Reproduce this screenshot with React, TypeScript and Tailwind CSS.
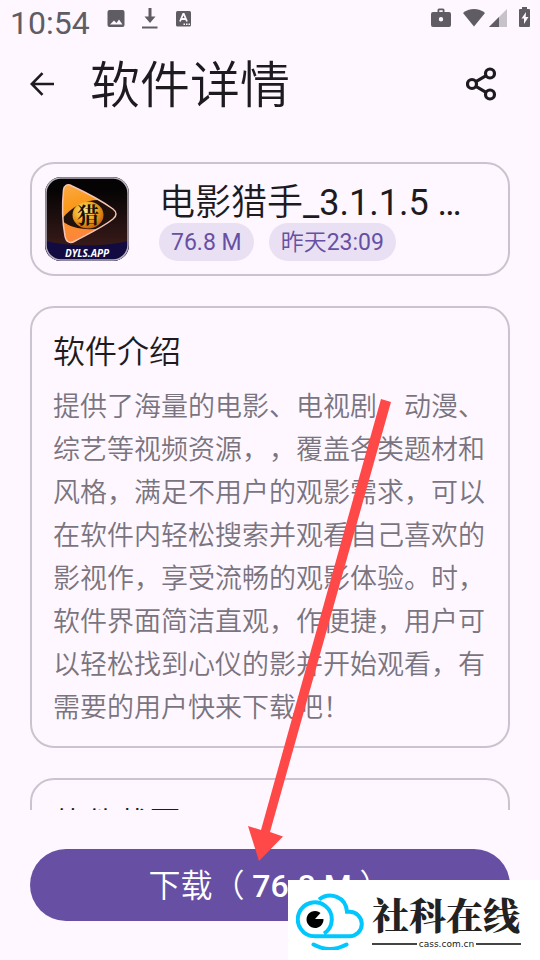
import React from 'react';

const description =
  '提供了海量的电影、电视剧、动漫、综艺等视频资源，，覆盖各类题材和风格，满足不用户的观影需求，可以在软件内轻松搜索并观看自己喜欢的影视作，享受流畅的观影体验。时，软件界面简洁直观，作便捷，用户可以轻松找到心仪的影并开始观看，有需要的用户快来下载吧！';

const StatusBar: React.FC = () => (
  <div className="flex h-11 shrink-0 items-start justify-between pr-2 pl-2.5 text-[#605c64]">
    <div className="flex items-start">
      <span className="w-20 pt-1 text-[32px] leading-[38px]">10:54</span>
      <div className="flex gap-4 pt-2 pl-4">
        <svg width="20" height="22" viewBox="0 0 20 22" fill="currentColor">
          <path
            fillRule="evenodd"
            d="M3.500 2h13a2 2 0 0 1 2 2v13a2 2 0 0 1-2 2h-13a2 2 0 0 1-2-2V4a2 2 0 0 1 2-2zM4 16.500h12.500L13 11.500 10.500 15 8 12.500z"
          />
        </svg>
        <svg width="18" height="22" viewBox="0 0 18 22" fill="currentColor">
          <path d="M6.500 0h3v8.500h4L8 15 2.500 8.500h4zM0 18.500h15.500v2H0z" />
        </svg>
        <svg width="16" height="22" viewBox="0 0 16 22">
          <rect x="0" y="3" width="15" height="15.500" rx="1.500" fill="currentColor" />
          <path
            d="M4 13.500 7.200 6h.600l3.200 7.500M5.500 11h4"
            fill="none"
            stroke="#fef7ff"
            strokeWidth="1.800"
          />
          <path d="M7.500 15.500h1.500v1.500H7.500zM10 15.500h1.500v1.500H10zM12.500 15.500H14v1.500h-1.500z" fill="#fef7ff" />
        </svg>
      </div>
    </div>
    <div className="flex items-start pt-[7px]">
      <svg width="22" height="22" viewBox="0 0 22 22" fill="currentColor">
        <path
          fillRule="evenodd"
          d="M7.500 5V3a1.500 1.500 0 0 1 1.500-1.500h4A1.500 1.500 0 0 1 14.500 3v2H19a2 2 0 0 1 2 2v11a2 2 0 0 1-2 2H3a2 2 0 0 1-2-2V7a2 2 0 0 1 2-2zM9.300 5h3.400V3.200H9.300zM11 10a2.200 2.200 0 1 0 0 4.400 2.200 2.200 0 0 0 0-4.400z"
        />
      </svg>
      <svg className="ml-2.5" width="24" height="22" viewBox="0 0 24 22" fill="currentColor">
        <path d="M1 6C7 .700 17 .700 23 6L12 19.500z" />
      </svg>
      <svg className="ml-0.5" width="20" height="22" viewBox="0 0 20 22" fill="currentColor">
        <path d="M19 2v18H1z" opacity=".35" />
        <path d="M11 10v10H1z" />
      </svg>
      <svg className="ml-2.5" width="14" height="22" viewBox="0 0 14 22">
        <path
          d="M4 0h5v2h2a1 1 0 0 1 1 1v16a1 1 0 0 1-1 1H2a1 1 0 0 1-1-1V3a1 1 0 0 1 1-1h2z"
          fill="currentColor"
        />
        <path d="M8 5 3.500 11.500H6V17l4.500-7H7.700z" fill="#fef7ff" />
      </svg>
    </div>
  </div>
);

const Header: React.FC = () => (
  <header className="flex h-20 shrink-0 items-center px-[30px]">
    <button type="button" aria-label="返回" className="mr-9">
      <svg width="24" height="24" viewBox="0 0 24 24" fill="none" stroke="currentColor" strokeWidth="2.600">
        <path d="M24 12H2M12.500 1.200 1.800 12l10.700 10.800" />
      </svg>
    </button>
    <h1 className="grow pt-1 text-[50px] leading-[72px] font-[350]">软件详情</h1>
    <button type="button" aria-label="分享" className="mr-3">
      <svg width="32" height="36" viewBox="0 0 32 36" fill="none" stroke="currentColor" strokeWidth="3.200">
        <circle cx="24" cy="7.500" r="4.500" />
        <circle cx="6" cy="18" r="4.500" />
        <circle cx="24" cy="28.500" r="4.500" />
        <path d="m9.900 15.700 10.200-6M9.900 20.300l10.200 6" />
      </svg>
    </button>
  </header>
);

const AppIcon: React.FC = () => (
  <svg className="shrink-0" width="84" height="84" viewBox="0 0 84 84">
    <defs>
      <linearGradient id="back" x1="0" y1="0" x2="0" y2="1">
        <stop offset=".15" stopColor="#050304" />
        <stop offset="1" stopColor="#45211f" />
      </linearGradient>
      <linearGradient id="play" x1="0" y1="0" x2=".3" y2="1">
        <stop offset="0" stopColor="#ffb35c" />
        <stop offset=".4" stopColor="#f9991c" />
        <stop offset="1" stopColor="#ff7a4e" />
      </linearGradient>
      <radialGradient id="ball" cx=".4" cy=".35" r=".65">
        <stop offset="0" stopColor="#ffe88f" />
        <stop offset=".55" stopColor="#f0ab22" />
        <stop offset="1" stopColor="#c9650c" />
      </radialGradient>
      <clipPath id="frame">
        <rect x="0" y="0" width="84" height="84" rx="16" />
      </clipPath>
      <clipPath id="shape">
        <path d="M27 9c-5-3-8 0-8.500 4C17 28 17 43 20 59c1 6 5 8 10 5 15-8 28-14 38-22 4-3 4-7 0-10C54 22 40 15 27 9z" />
      </clipPath>
    </defs>
    <g clipPath="url(#frame)">
      <rect width="84" height="84" fill="url(#back)" />
      <path d="M0 64q42 9 84 0v20H0z" fill="#110b42" />
    </g>
    <g clipPath="url(#shape)">
      <rect width="84" height="84" fill="url(#play)" />
      <path d="M16 43C26 29 42 22 56 23l20 12-6 12C50 55 28 54 16 43z" fill="#21110a" />
    </g>
    <path
      d="M27 9c-5-3-8 0-8.500 4C17 28 17 43 20 59c1 6 5 8 10 5 15-8 28-14 38-22 4-3 4-7 0-10C54 22 40 15 27 9z"
      fill="none"
      stroke="#f3c5b5"
      strokeWidth="1.500"
    />
    <ellipse cx="43" cy="38" rx="15.500" ry="13.500" fill="url(#ball)" />
    <text
      x="43"
      y="46"
      textAnchor="middle"
      fontSize="22"
      fontWeight="700"
      fontFamily="Noto Serif CJK SC, Noto Sans CJK SC, serif"
      fill="#1b1003"
    >
      猎
    </text>
    <text
      x="42"
      y="80"
      textAnchor="middle"
      fontSize="10"
      fontWeight="700"
      fontStyle="italic"
      fontFamily="Open Sans, sans-serif"
      fill="#ffffff"
    >
      DYLS.APP
    </text>
    <rect x="1" y="1" width="82" height="82" rx="15" fill="none" stroke="#b9b3bf" strokeWidth="1.500" />
  </svg>
);

const Chip: React.FC<{ children: React.ReactNode }> = ({ children }) => (
  <span className="rounded-full bg-[#e9e0f3] px-3 pt-0.5 text-[23px] leading-9 text-[#6750a4]">{children}</span>
);

const Section: React.FC<{ title: string; children?: React.ReactNode }> = ({ title, children }) => (
  <section className="shrink-0 rounded-3xl border-2 border-[#cac4d0] px-[21px] pt-[22px] pb-4 font-[350]">
    <h2 className="text-[32px] leading-[44px]">{title}</h2>
    {children}
  </section>
);

const Watermark: React.FC = () => (
  <div className="absolute right-0 bottom-0 flex h-20 w-[252px] items-center bg-white pl-2">
    <svg width="68" height="60" viewBox="0 0 68 60" fill="none" stroke="#00c8ff" strokeWidth="4">
      <path d="M28 43.600A17 17 0 1 0 18.700 46.300H53.500a12.300 12.300 0 0 0 0-24.600H51C50 7 34 1 23 9.500" />
      <path d="M17.500 54.500q16.500 9 33 0" strokeLinecap="round" />
      <path d="M19 29l5.500-6A8.500 8.500 0 1 0 27.500 29z" fill="#000000" stroke="none" />
    </svg>
    <div className="ml-2 w-[149px] text-[#222222]">
      <div className="pt-1 font-['Noto_Serif_CJK_SC','Noto_Sans_CJK_SC',serif] text-[37px] leading-[44px] font-black">
        社科在线
      </div>
      <div className="flex items-center gap-0.5 font-['DejaVu_Sans',sans-serif] text-[9px] leading-4">
        <span className="h-0.5 grow bg-[#444444]" />
        cass.com.cn
        <span className="h-0.5 grow bg-[#444444]" />
      </div>
    </div>
  </div>
);

const App: React.FC = () => {
  return (
    <div
      lang="zh-CN"
      className="relative flex h-screen flex-col overflow-hidden bg-[#fef7ff] font-['Roboto','Noto_Sans_CJK_SC',sans-serif] text-[#1d1b20]"
    >
      <StatusBar />
      <Header />

      <main className="flex min-h-0 grow flex-col gap-[30px] overflow-hidden px-[30px] pt-[38px]">
        <section className="flex shrink-0 items-center gap-[30px] rounded-3xl border-2 border-[#cac4d0] p-[13px]">
          <AppIcon />
          <div className="min-w-0">
            <h2 className="truncate pt-1.5 text-4xl leading-10">
              <span className="font-[350]">电影猎手</span>_3.1.1.5 …
            </h2>
            <div className="flex gap-[15px]">
              <Chip>76.8 M</Chip>
              <Chip>
                <span className="font-[350]">昨天</span>23:09
              </Chip>
            </div>
          </div>
        </section>

        <Section title="软件介绍">
          <p className="mt-3 text-[27px] leading-[43px] text-[#79747e] [text-spacing-trim:space-all]">
            {description}
          </p>
        </Section>

        <Section title="软件截图" />
      </main>

      <footer className="shrink-0 px-[30px] py-[39px]">
        <button
          type="button"
          className="block h-[72px] w-full rounded-full bg-[#6750a4] pt-0.5 text-[32px] font-[350] text-white"
        >
          下载（ <span className="font-medium">76.8 M</span> ）
        </button>
      </footer>

      {/* Pointer to the download button */}
      <svg
        className="pointer-events-none absolute top-[398px] left-[246px]"
        width="148"
        height="464"
        viewBox="0 0 148 464"
        fill="#ff4848"
      >
        <path d="M135 1 145 4 24 434l13 4.500L13 463 2 428l13 4z" />
      </svg>

      <Watermark />
    </div>
  );
};

export default App;
